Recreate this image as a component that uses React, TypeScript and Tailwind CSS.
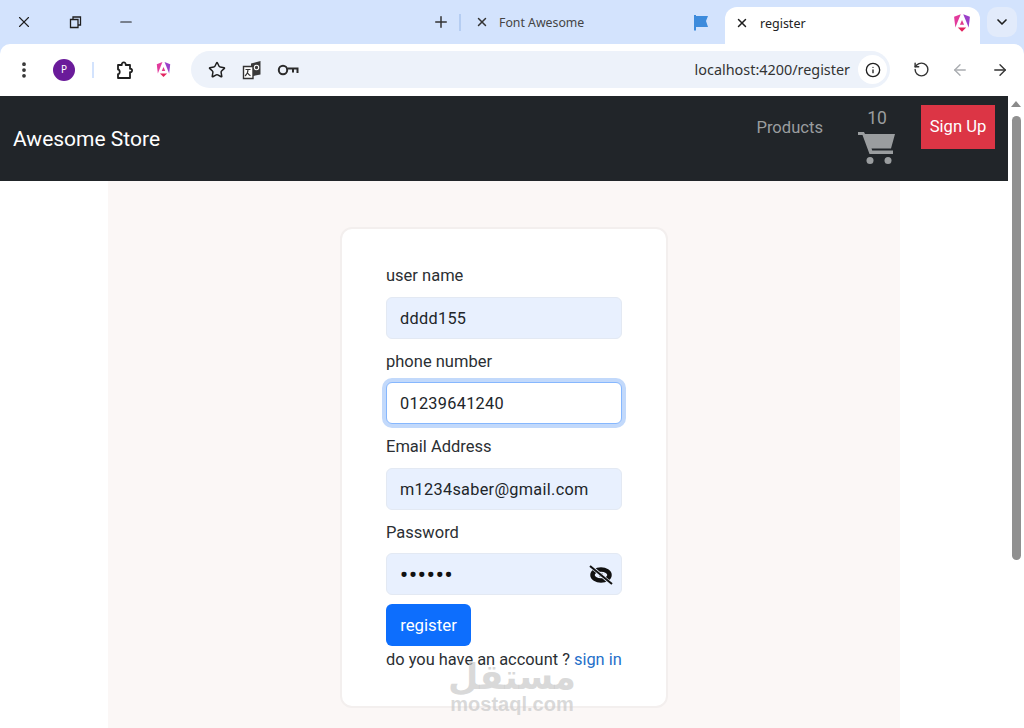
import { ArrowLeft, ArrowRight, ChevronDown, Info, Minus, MoreVertical, Plus, RotateCcw, Star, X } from "lucide-react";

const AngularLogo = ({ size = 18 }: { size?: number }) => (
    <svg width={size} height={size} viewBox="0 0 24 24">
        <path d="M10.500 1.500 2.500 4.500 4 17.500z" fill="#e23a9c" />
        <path d="M13.500 1.500 21.500 4.500 20 17.500z" fill="#9a3fc9" />
        <path d="M12 8.500 9.500 14h5z" fill="#e03a8c" />
        <path d="M7 17.500h10l-5 5z" fill="#e3245f" />
    </svg>
);

const PuzzleIcon = () => (
    <svg width="20" height="20" viewBox="0 0 20 20" fill="none" stroke="#1f1f1f" strokeWidth="1.800" strokeLinejoin="round">
        <path d="M3 5h3.800c-.5-3.500 4.400-3.500 3.900 0H15v3.800c2.800-.4 2.800 3.800 0 3.400V18H3v-3.800c2.300.3 2.300-5 0-4.700z" />
    </svg>
);

const TranslateIcon = () => (
    <svg width="20" height="20" viewBox="0 0 20 20">
        <path d="M1.500 6.500h9.500v12H1.500z" fill="#fff" stroke="#333" strokeWidth="1.400" />
        <path d="M3.500 9.500h5M6 9.500c0 3-1.200 5-3 6.500M5 12c.8 1.500 2 3 3.500 3.800" fill="none" stroke="#333" strokeWidth="1.100" />
        <path d="M9 3.500 18.500 1v13.500L11 16V6.500H9z" fill="#3a3a3a" />
        <circle cx="14.500" cy="7.500" r="2.200" fill="none" stroke="#fff" strokeWidth="1.100" />
    </svg>
);

const KeyIcon = () => (
    <svg width="22" height="14" viewBox="0 0 22 14" fill="none" stroke="#2b2b2b" strokeWidth="2">
        <circle cx="6" cy="7" r="4.200" />
        <path d="M10.500 5.500H20.500V10M16 5.500V9.500" />
    </svg>
);

const FlagIcon = () => (
    <svg width="16" height="17" viewBox="0 0 16 17">
        <path d="M1 1h2v1h12l-2 5 2 6H3v3.500H1z" fill="#3d8bdc" />
    </svg>
);

const CartIcon = () => (
    <svg width="38" height="33" viewBox="0 0 38 33" fill="#9a9d9f">
        <path d="M0 1h6l1 2h30l-4 14.500H13.500l.7 2H35v3.500H11.500L4.500 4H0z" />
        <circle cx="12" cy="29.500" r="3.500" />
        <circle cx="30" cy="29.500" r="3.500" />
    </svg>
);

const EyeOffIcon = () => (
    <svg width="24" height="20" viewBox="0 0 24 20" fill="none">
        <ellipse cx="12" cy="10" rx="8.500" ry="5.500" stroke="#111" strokeWidth="4.500" />
        <circle cx="12" cy="10" r="2" fill="#111" />
        <path d="M2 1.500 22 18.500" stroke="#e8f0fe" strokeWidth="3.500" />
        <path d="M1 1 23 19" stroke="#111" strokeWidth="2" />
    </svg>
);

const FormField = ({ label, value, type = "text", focused = false, icon }: { label: string; value: string; type?: string; focused?: boolean; icon?: boolean }) => (
    <div className="pt-[11px]">
        <label className="block h-6 leading-6 mb-[8.5px] text-[16.5px] text-[#2b2f33]">{label}</label>
        <div className="relative">
            <input
                readOnly
                type={type}
                value={value}
                className={
                    focused
                        ? "block w-full h-[42px] px-[13px] pt-[1px] rounded-md bg-white border border-[#86b7fe] ring-4 ring-[#c2d9fb] outline-none text-[16.3px] text-[#212529] tracking-[0.3px]"
                        : type === "password"
                          ? "block w-full h-[42px] px-[13px] pt-[1px] rounded-md bg-[#e8f0fe] border border-[#e3e9f3] outline-none text-[22px] text-[#111] font-bold tracking-[1px]"
                          : "block w-full h-[42px] px-[13px] pt-[1px] rounded-md bg-[#e8f0fe] border border-[#e3e9f3] outline-none text-[16.3px] text-[#212529] tracking-[0.3px]"
                }
            />
            {icon && (
                <div className="absolute right-[9px] top-[12px]">
                    <EyeOffIcon />
                </div>
            )}
        </div>
    </div>
);

export default function App() {
    return (
        <div className="w-[1024px] h-[728px] overflow-hidden flex flex-col bg-[#d3e3fd] font-['Noto_Sans',sans-serif]">
            {/* tab strip */}
            <div className="h-[44px] shrink-0 flex text-[#1f1f1f]">
                <div className="w-[432px] pl-[15px] flex items-center gap-[33px]">
                    <X size={18} strokeWidth={1.5} />
                    <svg width="18" height="18" viewBox="0 0 18 18" fill="none" stroke="#1f1f1f" strokeWidth="1.3">
                        <path d="M4.500 6.500h7.500v8H4.500zM7 6.500V4h7.500v8H12" />
                    </svg>
                    <Minus size={18} strokeWidth={1.5} />
                </div>
                <div className="w-[293px] flex items-center">
                    <Plus size={18} strokeWidth={2} className="text-[#333]" />
                    <div className="w-[2px] h-[17px] ml-[9px] bg-[#b5cdf2]" />
                    <X size={14} strokeWidth={2.5} className="ml-[14px] text-[#333]" />
                    <span className="ml-[10px] pt-[2px] text-[12.3px] text-[#444]">Font Awesome</span>
                    <div className="ml-auto mr-[16px]"><FlagIcon /></div>
                </div>
                <div className="w-[255px] mt-[7px] pb-[6px] bg-white rounded-t-[12px] flex items-center pl-[10px] pr-[8px]">
                    <X size={14} strokeWidth={2.5} />
                    <span className="ml-[11px] pt-[3px] text-[12.5px] text-[#222]">register</span>
                    <div className="ml-auto"><AngularLogo size={20} /></div>
                </div>
                <div className="w-[30px] h-[30px] ml-[7px] mt-[7px] rounded-[10px] bg-[#e2ebfb] flex items-center justify-center">
                    <ChevronDown size={16} strokeWidth={2.5} />
                </div>
            </div>

            {/* toolbar */}
            <div className="h-[52px] shrink-0 bg-white rounded-t-[10px] flex items-center text-[#1f1f1f] pb-[1px]">
                <MoreVertical size={20} strokeWidth={2.5} className="ml-[14px] text-[#333]" />
                <div className="w-[22px] h-[22px] ml-[19px] rounded-full bg-[#6a1b9a] text-white text-[10px] flex items-center justify-center">P</div>
                <div className="w-[2px] h-[16px] ml-[17px] bg-[#d3e3fd]" />
                <div className="ml-[21px]"><PuzzleIcon /></div>
                <div className="ml-[20px]"><AngularLogo size={17} /></div>
                <div className="w-[699px] h-[37px] ml-[19px] rounded-full bg-[#edf2fa] flex items-center pl-[17px] pr-[3px]">
                    <Star size={18} strokeWidth={2} />
                    <div className="ml-[16px]"><TranslateIcon /></div>
                    <div className="ml-[15px]"><KeyIcon /></div>
                    <span className="ml-auto text-[14.4px] text-[#333]">localhost:4200/register</span>
                    <div className="w-[29px] h-[29px] ml-[8px] rounded-full bg-white flex items-center justify-center">
                        <Info size={16} strokeWidth={2} />
                    </div>
                </div>
                <RotateCcw size={17} strokeWidth={2} className="ml-[23px] text-[#333]" />
                <ArrowLeft size={18} strokeWidth={1.8} className="ml-[21px] text-[#a9acb0]" />
                <ArrowRight size={18} strokeWidth={1.8} className="ml-[22px] text-[#333]" />
            </div>

            {/* page + scrollbar */}
            <div className="flex flex-1 min-h-0 bg-white font-['Roboto',sans-serif]">
                <div className="w-[1008px] flex flex-col">
                    <nav className="h-[85px] shrink-0 bg-[#212529] flex items-start pl-[13px] pr-[13px]">
                        <span className="mt-[27px] text-[21px] leading-[33px] text-white">Awesome Store</span>
                        <span className="ml-auto mt-[20px] text-[16.6px] leading-6 text-[#9a9d9f]">Products</span>
                        <div className="ml-[35px] w-[38px] flex flex-col items-center text-[#9a9d9f]">
                            <span className="mt-[10px] text-[17.5px] leading-[24px]">10</span>
                            <div className="mt-[1px]"><CartIcon /></div>
                        </div>
                        <button className="ml-[25px] mt-[9px] w-[74px] h-[44px] bg-[#dc3545] text-white text-[16.6px]">Sign Up</button>
                    </nav>
                    <div className="relative flex-1 min-h-0 w-[792px] ml-[108px] bg-[#fbf7f6] pt-[46px] pl-[232px]">
                        <div className="w-[328px] h-[481px] bg-white border-2 border-[#f3efee] rounded-[12px] px-[44px] pt-[24px]">
                            <FormField label="user name" value="dddd155" />
                            <FormField label="phone number" value="01239641240" focused />
                            <FormField label="Email Address" value="m1234saber@gmail.com" />
                            <FormField label="Password" value="dddddd" type="password" icon />
                            <button className="block mt-[9px] pt-[1px] w-[85px] h-[42px] rounded-md bg-[#0d6efd] text-white text-[16.8px]">register</button>
                            <p className="mt-[2px] leading-6 whitespace-nowrap text-[16.4px] text-[#2b2f33]">
                                do you have an account ? <a className="text-[#1f6fc9]">sign in</a>
                            </p>
                        </div>
                        {/* mostaql watermark */}
                        <div className="absolute left-[337px] top-[479px] w-[134px] flex flex-col items-center text-[#c9c9c9]/70 font-bold pointer-events-none">
                            <span dir="rtl" className="text-[35px] leading-[34px] font-['DejaVu_Sans',sans-serif]">مستقل</span>
                            <span className="text-[20px] leading-[20px] font-['Liberation_Sans',sans-serif]">mostaql.com</span>
                        </div>
                    </div>
                </div>
                <div className="w-[16px] bg-white flex flex-col items-center">
                    <div className="mt-[5px] w-0 h-0 border-x-[5px] border-x-transparent border-b-[6px] border-b-[#8a8a8a]" />
                    <div className="mt-[9px] w-[9px] h-[444px] rounded-full bg-[#909090]" />
                </div>
            </div>
        </div>
    );
}
